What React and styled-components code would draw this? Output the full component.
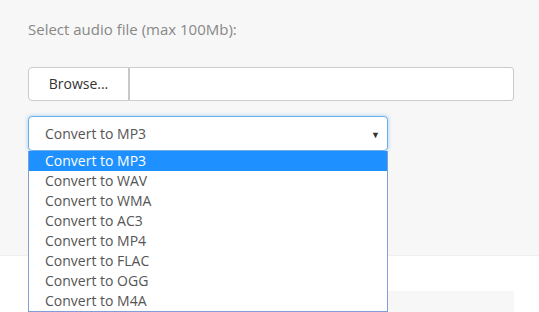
import React from "react";
import styled, { createGlobalStyle } from "styled-components";

const Global = createGlobalStyle`
  html, body { margin: 0; padding: 0; background: #ffffff; }
  body { font-family: "Open Sans", "Liberation Sans", sans-serif; font-size: 14px; }
`;

const Page = styled.div`
  width: 539px;
  height: 312px;
  overflow: hidden;
  display: flex;
  flex-direction: column;
`;

const Panel = styled.section`
  flex-shrink: 0;
  background: #f7f7f7;
  height: 256px;
  box-sizing: border-box;
  padding: 19px 26px 0 28px;
  display: flex;
  flex-direction: column;
  border-bottom: 1px solid #f0f0f0;
`;

const Label = styled.div`
  color: #888888;
  font-size: 15px;
  line-height: 20px;
  height: 20px;
`;

const FileRow = styled.div`
  margin-top: 28px;
  display: flex;
  height: 34px;
  width: 486px;
`;

const BrowseButton = styled.button`
  font-family: inherit;
  font-size: 14px;
  color: #333333;
  background: #ffffff;
  border: 1px solid #cccccc;
  border-radius: 4px 0 0 4px;
  width: 101px;
  height: 34px;
  padding: 0;
  margin: 0;
  line-height: 20px;
`;

const FileField = styled.div`
  flex: 1;
  background: #ffffff;
  border: 1px solid #cccccc;
  border-left-width: 2px;
  border-left-color: #c8c8c8;
  border-radius: 0 4px 4px 0;
  box-sizing: border-box;
  height: 34px;
  margin-left: -1px;
`;

const SelectWrap = styled.div`
  position: relative;
  margin-top: 15px;
  width: 360px;
  z-index: 2;
`;

const SelectBox = styled.div`
  height: 35px;
  box-sizing: border-box;
  background: #ffffff;
  border: 1px solid #66afe9;
  border-radius: 4px;
  box-shadow: 0 0 4px rgba(102, 175, 233, 0.6);
  display: flex;
  align-items: center;
  justify-content: space-between;
  padding: 0 7px 0 16px;
  color: #555555;
  font-size: 14px;
`;

const Arrow = styled.span`
  font-size: 9px;
  color: #333333;
  line-height: 1;
  margin-top: 1px;
`;

const DropList = styled.ul`
  position: absolute;
  top: 35px;
  left: 0;
  width: 360px;
  box-sizing: border-box;
  margin: 0;
  padding: 0;
  list-style: none;
  background: #ffffff;
  border: 1px solid #7f9fd6;
  border-top: 0;
  z-index: 2;
`;

const Option = styled.li`
  height: 20px;
  line-height: 20px;
  padding-left: 16px;
  font-size: 14px;
  color: ${(p) => (p.$active ? "#ffffff" : "#555555")};
  background: ${(p) => (p.$active ? "#1e90ff" : "transparent")};
`;

const Lower = styled.section`
  flex: 1;
  background: #ffffff;
  padding: 35px 25px 0 28px;
`;

const GreyBox = styled.div`
  background: #f7f7f7;
  height: 40px;
  width: 486px;
`;

const options = ["MP3", "WAV", "WMA", "AC3", "MP4", "FLAC", "OGG", "M4A"];

export default function App() {
  return (
    <Page>
      <Global />
      <Panel>
        <Label>Select audio file (max 100Mb):</Label>
        <FileRow>
          <BrowseButton>Browse...</BrowseButton>
          <FileField />
        </FileRow>
        <SelectWrap>
          <SelectBox>
            <span>Convert to MP3</span>
            <Arrow>▼</Arrow>
          </SelectBox>
          <DropList>
            {options.map((o, i) => (
              <Option key={o} $active={i === 0}>
                Convert to {o}
              </Option>
            ))}
          </DropList>
        </SelectWrap>
      </Panel>
      <Lower>
        <GreyBox />
      </Lower>
    </Page>
  );
}
